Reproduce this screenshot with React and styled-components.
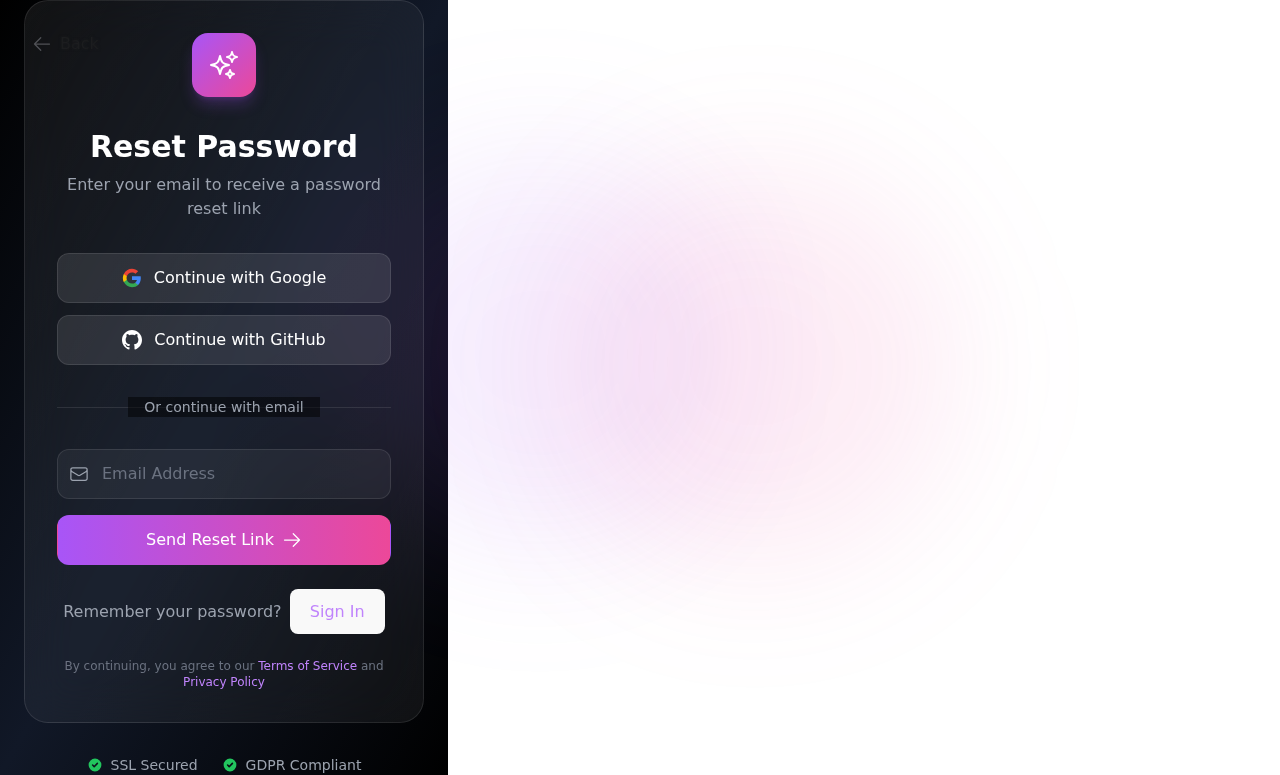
import React from "react";
import styled, { createGlobalStyle } from "styled-components";
import {
  HiOutlineSparkles,
  HiOutlineArrowLeft,
  HiOutlineArrowRight,
  HiOutlineEnvelope,
} from "react-icons/hi2";
import { HiCheckCircle } from "react-icons/hi";

const GlobalStyle = createGlobalStyle`
  *, *::before, *::after { box-sizing: border-box; }
  html, body { margin: 0; padding: 0; background: #fff; }
  body {
    font-family: "DejaVu Sans", sans-serif;
    font-size: 16px;
    line-height: 24px;
    overflow: hidden;
  }
  h1, p { margin: 0; }
  button, input { font: inherit; }
  svg { display: block; flex-shrink: 0; }
`;

const Page = styled.div`
  position: relative;
  width: 448px;
  height: 775px;
  padding: 0 24px;
  background: linear-gradient(to bottom right, #000, #111827, #000);
`;

const Backdrop = styled.div`
  position: fixed;
  inset: 0;
  overflow: hidden;
  pointer-events: none;
`;

const Glow = styled.div`
  position: absolute;
  left: ${(p) => p.$x - 192}px;
  top: ${(p) => p.$y - 192}px;
  width: 384px;
  height: 384px;
  border-radius: 50%;
  background: ${(p) => p.$color};
  filter: blur(64px);
  transform: scale(1.05);
`;

const BackLink = styled.div`
  position: absolute;
  left: 32px;
  top: 32px;
  display: flex;
  align-items: center;
  gap: 8px;
  color: #505156;
  z-index: 2;
`;

const BackLabel = styled.span`
  color: #1c1d1f;
  text-shadow: 0 0 3px rgba(30, 31, 33, 0.8);
`;

const Card = styled.main`
  position: relative;
  z-index: 1;
  padding: 32px;
  border: 1px solid rgba(255, 255, 255, 0.1);
  border-radius: 24px;
  background: linear-gradient(
    to bottom right,
    rgba(255, 255, 255, 0.07),
    rgba(255, 255, 255, 0.045),
    rgba(255, 255, 255, 0.06)
  );
  backdrop-filter: blur(24px);
`;

const Header = styled.header`
  display: flex;
  flex-direction: column;
  align-items: center;
  text-align: center;
  margin-bottom: 32px;
`;

const Logo = styled.div`
  display: grid;
  place-items: center;
  width: 64px;
  height: 64px;
  margin-bottom: 32px;
  border-radius: 16px;
  color: #fff;
  background: linear-gradient(to bottom right, #a855f7, #ec4899);
  box-shadow: 0 10px 15px -3px rgba(168, 85, 247, 0.25), 0 4px 6px -4px rgba(168, 85, 247, 0.25);
`;

const Title = styled.h1`
  margin-bottom: 8px;
  font-size: 30px;
  line-height: 36px;
  font-weight: 700;
  color: #fff;
`;

const Subtitle = styled.p`
  color: #9ca3af;
`;

const Socials = styled.div`
  display: flex;
  flex-direction: column;
  gap: 12px;
`;

const SocialButton = styled.button`
  display: flex;
  align-items: center;
  justify-content: center;
  gap: 12px;
  height: 50px;
  border: 1px solid rgba(255, 255, 255, 0.1);
  border-radius: 12px;
  background: rgba(255, 255, 255, 0.1);
  color: #fff;
`;

const Divider = styled.div`
  display: grid;
  margin: 32px 0;
  align-items: center;
  justify-items: center;

  &::before {
    content: "";
    grid-area: 1 / 1;
    width: 100%;
    height: 1px;
    margin-top: 1px;
    background: rgba(255, 255, 255, 0.1);
  }
`;

const DividerLabel = styled.span`
  grid-area: 1 / 1;
  z-index: 1;
  padding: 0 16px;
  font-size: 14px;
  line-height: 20px;
  color: #9ca3af;
  background: rgba(0, 0, 0, 0.5);
`;

const Field = styled.label`
  display: flex;
  align-items: center;
  gap: 13px;
  height: 50px;
  padding: 0 11px;
  border: 1px solid rgba(255, 255, 255, 0.1);
  border-radius: 12px;
  background: rgba(255, 255, 255, 0.05);
  color: #9ca3af;
`;

const EmailInput = styled.input`
  flex: 1;
  min-width: 0;
  height: 24px;
  padding: 0;
  border: 0;
  outline: 0;
  background: transparent;
  color: #fff;

  &::placeholder {
    color: #6b7280;
    opacity: 1;
  }
`;

const SubmitButton = styled.button`
  display: flex;
  align-items: center;
  justify-content: center;
  gap: 8px;
  width: 100%;
  height: 50px;
  margin-top: 16px;
  border: 1px solid transparent;
  border-radius: 12px;
  background: linear-gradient(to right, #a855f7, #ec4899);
  color: #fff;
`;

const SignInRow = styled.div`
  display: flex;
  align-items: center;
  justify-content: center;
  gap: 8px;
  height: 45px;
  margin: 24px 0;
  color: #9ca3af;
`;

const SignInButton = styled.button`
  height: 45px;
  padding: 0 19.2px;
  border: 1px solid transparent;
  border-radius: 8px;
  background: #f9f9f9;
  color: #c084fc;
`;

const Legal = styled.p`
  font-size: 12px;
  line-height: 16px;
  text-align: center;
  color: #6b7280;
`;

const LegalLink = styled.span`
  color: #c084fc;
`;

const TrustRow = styled.footer`
  position: relative;
  display: flex;
  justify-content: center;
  gap: 24px;
  margin-top: 32px;
  font-size: 14px;
  line-height: 20px;
  color: #9ca3af;
`;

const TrustItem = styled.span`
  display: flex;
  align-items: center;
  gap: 8px;

  svg { color: #22c55e; }
`;

const GoogleIcon = () => (
  <svg width="20" height="20" viewBox="0 0 24 24">
    <path fill="#4285F4" d="M22.56 12.25c0-.78-.07-1.53-.2-2.25H12v4.26h5.92c-.26 1.37-1.04 2.53-2.21 3.31v2.77h3.57c2.08-1.92 3.28-4.74 3.28-8.09z" />
    <path fill="#34A853" d="M12 23c2.97 0 5.46-.98 7.28-2.66l-3.57-2.77c-.98.66-2.23 1.06-3.71 1.06-2.86 0-5.29-1.93-6.16-4.53H2.18v2.84C3.99 20.53 7.7 23 12 23z" />
    <path fill="#FBBC05" d="M5.84 14.09c-.22-.66-.35-1.36-.35-2.09s.13-1.43.35-2.09V7.07H2.18C1.43 8.55 1 10.22 1 12s.43 3.45 1.18 4.93l2.85-2.22.81-.62z" />
    <path fill="#EA4335" d="M12 5.38c1.62 0 3.06.56 4.21 1.64l3.15-3.15C17.45 2.09 14.97 1 12 1 7.7 1 3.99 3.47 2.18 7.07l3.66 2.84c.87-2.6 3.3-4.53 6.16-4.53z" />
  </svg>
);

const GitHubIcon = () => (
  <svg width="20" height="20" viewBox="0 0 24 24" fill="currentColor">
    <path d="M12 0c-6.626 0-12 5.373-12 12 0 5.302 3.438 9.8 8.207 11.387.599.111.793-.261.793-.577v-2.234c-3.338.726-4.033-1.416-4.033-1.416-.546-1.387-1.333-1.756-1.333-1.756-1.089-.745.083-.729.083-.729 1.205.084 1.839 1.237 1.839 1.237 1.07 1.834 2.807 1.304 3.492.997.107-.775.418-1.305.762-1.604-2.665-.305-5.467-1.334-5.467-5.931 0-1.311.469-2.381 1.236-3.221-.124-.303-.535-1.524.117-3.176 0 0 1.008-.322 3.301 1.23.957-.266 1.983-.399 3.003-.404 1.02.005 2.047.138 3.006.404 2.291-1.552 3.297-1.23 3.297-1.23.653 1.653.242 2.874.118 3.176.77.84 1.235 1.911 1.235 3.221 0 4.609-2.807 5.624-5.479 5.921.43.372.823 1.102.823 2.222v3.293c0 .319.192.694.801.576 4.765-1.589 8.199-6.086 8.199-11.386 0-6.627-5.373-12-12-12z" />
  </svg>
);

export default function App() {
  return (
    <>
      <GlobalStyle />
      <Page>
        <Backdrop>
          <Glow $x={540} $y={350} $color="rgba(168, 85, 247, 0.1)" />
          <Glow $x={755} $y={366} $color="rgba(236, 72, 153, 0.1)" />
        </Backdrop>
        <BackLink>
          <HiOutlineArrowLeft size={20} />
          <BackLabel>Back</BackLabel>
        </BackLink>
        <Card>
          <Header>
            <Logo>
              <HiOutlineSparkles size={32} />
            </Logo>
            <Title>Reset Password</Title>
            <Subtitle>Enter your email to receive a password reset link</Subtitle>
          </Header>
          <Socials>
            <SocialButton>
              <GoogleIcon />
              Continue with Google
            </SocialButton>
            <SocialButton>
              <GitHubIcon />
              Continue with GitHub
            </SocialButton>
          </Socials>
          <Divider>
            <DividerLabel>Or continue with email</DividerLabel>
          </Divider>
          <Field>
            <HiOutlineEnvelope size={20} />
            <EmailInput type="email" placeholder="Email Address" />
          </Field>
          <SubmitButton>
            Send Reset Link
            <HiOutlineArrowRight size={20} />
          </SubmitButton>
          <SignInRow>
            Remember your password?
            <SignInButton>Sign In</SignInButton>
          </SignInRow>
          <Legal>
            By continuing, you agree to our <LegalLink>Terms of Service</LegalLink> and{" "}
            <LegalLink>Privacy Policy</LegalLink>
          </Legal>
        </Card>
        <TrustRow>
          <TrustItem>
            <HiCheckCircle size={16} />
            SSL Secured
          </TrustItem>
          <TrustItem>
            <HiCheckCircle size={16} />
            GDPR Compliant
          </TrustItem>
        </TrustRow>
      </Page>
    </>
  );
}
